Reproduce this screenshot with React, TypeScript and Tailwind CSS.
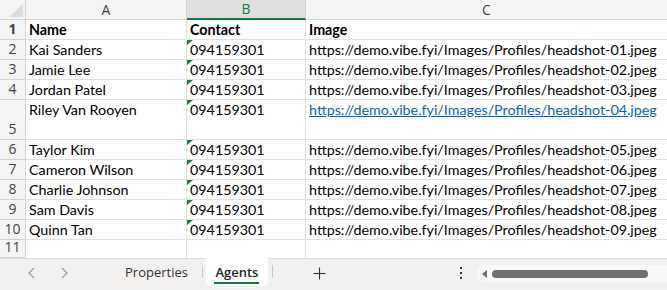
import React from 'react';

type Row = { n: number; name: string; contact: string; image: string; tall?: boolean; link?: boolean };

const rows: Row[] = [
  { n: 2, name: 'Kai Sanders', contact: '094159301', image: 'https://demo.vibe.fyi/Images/Profiles/headshot-01.jpeg' },
  { n: 3, name: 'Jamie Lee', contact: '094159301', image: 'https://demo.vibe.fyi/Images/Profiles/headshot-02.jpeg' },
  { n: 4, name: 'Jordan Patel', contact: '094159301', image: 'https://demo.vibe.fyi/Images/Profiles/headshot-03.jpeg' },
  { n: 5, name: 'Riley Van Rooyen', contact: '094159301', image: 'https://demo.vibe.fyi/Images/Profiles/headshot-04.jpeg', tall: true, link: true },
  { n: 6, name: 'Taylor Kim', contact: '094159301', image: 'https://demo.vibe.fyi/Images/Profiles/headshot-05.jpeg' },
  { n: 7, name: 'Cameron Wilson', contact: '094159301', image: 'https://demo.vibe.fyi/Images/Profiles/headshot-06.jpeg' },
  { n: 8, name: 'Charlie Johnson', contact: '094159301', image: 'https://demo.vibe.fyi/Images/Profiles/headshot-07.jpeg' },
  { n: 9, name: 'Sam Davis', contact: '094159301', image: 'https://demo.vibe.fyi/Images/Profiles/headshot-08.jpeg' },
  { n: 10, name: 'Quinn Tan', contact: '094159301', image: 'https://demo.vibe.fyi/Images/Profiles/headshot-09.jpeg' },
];

const cellFont = { fontFamily: 'Lato, "Liberation Sans", sans-serif' };
const uiFont = { fontFamily: '"Open Sans", "Noto Sans", sans-serif' };

function RowHead({ n }: { n: number }) {
  return (
    <div
      className="w-[26px] shrink-0 h-full flex items-end justify-center pb-[1px] bg-[#f5f5f5] border-r border-b border-[#d4d4d4] text-[14px] leading-[18px] text-[#444]"
      style={uiFont}
    >
      {n}
    </div>
  );
}

function Flag() {
  return (
    <span className="absolute left-0 top-0 w-0 h-0 border-t-[5px] border-r-[6px] border-t-[#1f7a36] border-r-transparent" />
  );
}

export default function App() {
  return (
    <div className="w-[667px] h-[290px] bg-white overflow-hidden flex flex-col">
      {/* column headers */}
      <div className="flex h-[20px] shrink-0 text-[14px] text-[#444]" style={uiFont}>
        <div className="w-[26px] shrink-0 bg-[#f5f5f5] border-r border-b border-[#d4d4d4] relative">
          <svg className="absolute left-[9px] top-[4px]" width="14" height="13" viewBox="0 0 14 13">
            <polygon points="14,0 14,13 0,13" fill="#dcdcdc" />
          </svg>
        </div>
        <div className="w-[161px] shrink-0 bg-[#f5f5f5] border-r border-b border-[#d4d4d4] flex items-center justify-center leading-none">A</div>
        <div className="w-[119px] shrink-0 bg-[#e0e0e0] border-r border-[#d4d4d4] border-b-2 border-b-[#107c41] flex items-center justify-center leading-none text-[#107c41]">B</div>
        <div className="flex-1 bg-[#f5f5f5] border-b border-[#d4d4d4] flex items-center justify-center leading-none">C</div>
      </div>

      {/* row 1 */}
      <div className="flex h-[20px] shrink-0 text-[14.3px] text-black font-bold" style={cellFont}>
        <RowHead n={1} />
        <div className="w-[161px] shrink-0 border-r border-b border-[#e1e1e1] px-[3px] flex items-end leading-[18px]">Name</div>
        <div className="w-[119px] shrink-0 border-r border-b border-[#e1e1e1] px-[3px] flex items-end leading-[18px]">Contact</div>
        <div className="flex-1 border-b border-[#e1e1e1] px-[3px] flex items-end leading-[18px]">Image</div>
      </div>

      {rows.map(r => (
        <div
          key={r.n}
          className={`flex shrink-0 text-[14.3px] text-black ${r.tall ? 'h-[40px]' : 'h-[20px]'}`}
          style={cellFont}
        >
          <RowHead n={r.n} />
          <div className="w-[161px] shrink-0 border-r border-b border-[#e1e1e1] px-[3px] leading-[18px] pt-[1px] whitespace-nowrap">
            {r.name}
          </div>
          <div className="relative w-[119px] shrink-0 border-r border-b border-[#e1e1e1] px-[3px] leading-[18px] pt-[1px]">
            <Flag />
            {r.contact}
          </div>
          <div className="flex-1 border-b border-[#e1e1e1] px-[3px] leading-[18px] pt-[1px] whitespace-nowrap overflow-hidden">
            {r.link ? <span className="text-[#0563c1] underline">{r.image}</span> : r.image}
          </div>
        </div>
      ))}

      {/* row 11 */}
      <div className="flex h-[18px] shrink-0">
        <RowHead n={11} />
        <div className="w-[161px] shrink-0 border-r border-[#e1e1e1]" />
        <div className="w-[119px] shrink-0 border-r border-[#e1e1e1]" />
        <div className="flex-1" />
      </div>

      {/* sheet tabs */}
      <div className="flex-1 bg-[#f3f0f0] border-t border-[#dcdcdc] flex items-start relative" style={uiFont}>
        <div className="flex items-center h-[28px] gap-[22px] pl-[27px] text-[#9a9a9a]">
          <svg width="10" height="14" viewBox="0 0 10 14" fill="none" stroke="currentColor" strokeWidth="1.2">
            <polyline points="7,2 2,7 7,12" />
          </svg>
          <svg width="10" height="14" viewBox="0 0 10 14" fill="none" stroke="currentColor" strokeWidth="1.2">
            <polyline points="3,2 8,7 3,12" />
          </svg>
        </div>
        <div className="ml-[56px] h-[28px] flex items-center text-[13px] text-[#333]">Properties</div>
        <div className="ml-[14px] mt-[6px] w-px h-[13px] bg-[#c8c8c8]" />
        <div className="ml-[3px] w-[62px] h-[28px] bg-white rounded-b-[5px] flex flex-col items-center justify-center -mt-px">
          <span className="text-[13px] leading-[18px] font-semibold text-[#242424] mt-[2px]">Agents</span>
          <span className="w-[45px] h-[2px] bg-[#107c41] mt-[1px]" />
        </div>
        <div className="ml-[4px] mt-[6px] w-px h-[13px] bg-[#c8c8c8]" />
        <div className="ml-[40px] h-[28px] flex items-center">
          <svg width="13" height="13" viewBox="0 0 13 13" stroke="#333" strokeWidth="1.1">
            <line x1="6.5" y1="0.5" x2="6.5" y2="12.5" />
            <line x1="0.5" y1="6.5" x2="12.5" y2="6.5" />
          </svg>
        </div>
        <div className="ml-[133px] h-[28px] flex items-center">
          <svg width="4" height="14" viewBox="0 0 4 14" fill="#333">
            <rect x="1" y="1" width="2" height="2" />
            <rect x="1" y="6" width="2" height="2" />
            <rect x="1" y="11" width="2" height="2" />
          </svg>
        </div>
        <div className="ml-[13px] mt-[6px] flex-1 h-[17px] bg-[#f9f7f7] rounded-l-full flex items-center pl-[6px]">
          <svg width="5" height="8" viewBox="0 0 5 8" fill="#707070">
            <polygon points="5,0 5,8 0,4" />
          </svg>
          <div className="ml-[5px] w-[156px] h-[8px] rounded-full bg-[#707070]" />
        </div>
      </div>
    </div>
  );
}
